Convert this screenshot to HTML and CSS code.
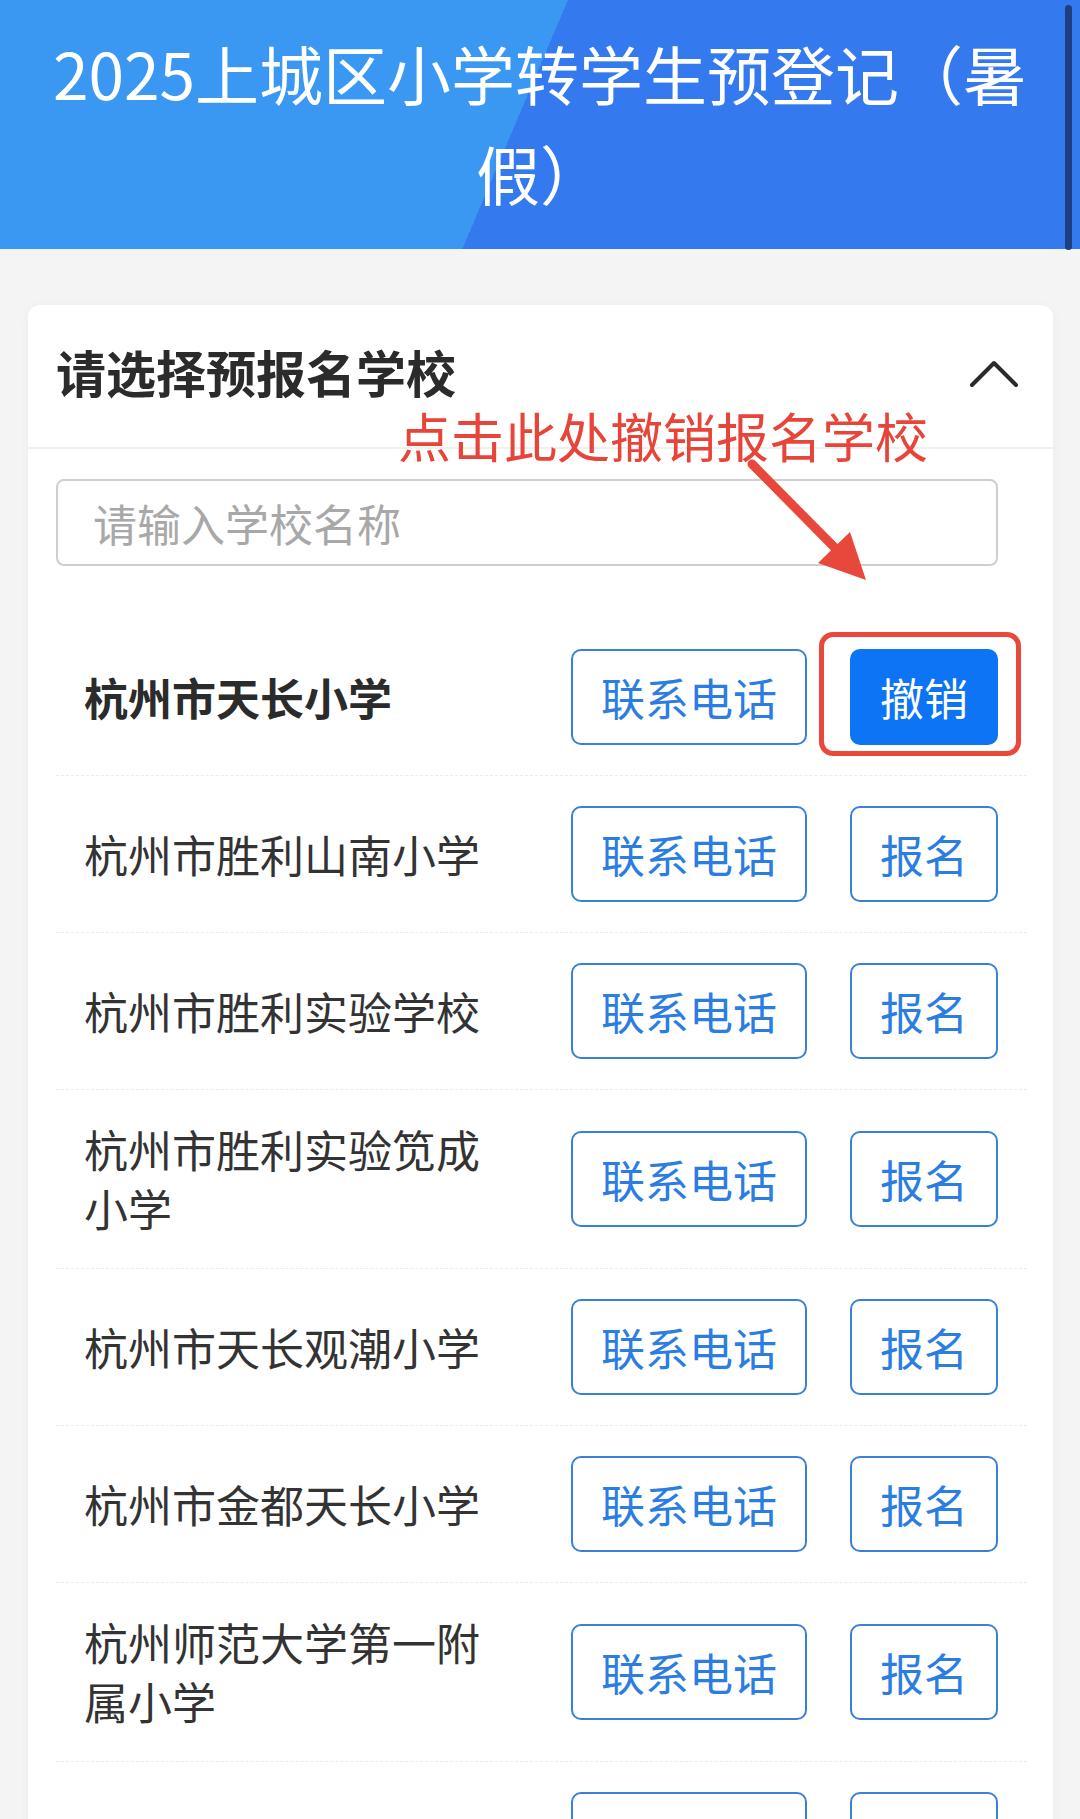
FILE: index.html
```html
<!DOCTYPE html>
<html lang="zh-CN">
<head>
    <meta charset="UTF-8">
    <meta name="viewport" content="width=device-width, initial-scale=1.0">
    <title>2025上城区小学转学生预登记（暑假）</title>
    <link rel="stylesheet" href="styles.css">
</head>
<body>
    <header class="banner">
        <h1 class="banner-title">2025上城区小学转学生预登记（暑假）</h1>
        <span class="scroll-thumb"></span>
    </header>

    <section class="card">
        <div class="card-head">
            <h2 class="card-title">请选择预报名学校</h2>
            <svg class="chevron" width="50" height="30" viewBox="0 0 50 30">
                <polyline points="3,27 25,5 47,27" fill="none" stroke="#2b2b2b" stroke-width="4" stroke-linecap="round" stroke-linejoin="round"/>
            </svg>
        </div>

        <!-- tip drawn over the list -->
        <div class="tip">点击此处撤销报名学校</div>
        <svg class="tip-arrow" width="160" height="140" viewBox="0 0 160 140">
            <line x1="24" y1="9" x2="112" y2="98" stroke="#e8483b" stroke-width="9" stroke-linecap="round"/>
            <polygon points="138,125 90,108 122,77" fill="#e8483b"/>
        </svg>

        <div class="card-body">
            <input class="search" type="text" placeholder="请输入学校名称">

            <ul class="school-list">
                <li class="school">
                    <span class="school-name picked">杭州市天长小学</span>
                    <div class="actions">
                        <button class="btn">联系电话</button>
                        <span class="mark">
                            <button class="btn btn-solid">撤销</button>
                        </span>
                    </div>
                </li>
                <li class="school">
                    <span class="school-name">杭州市胜利山南小学</span>
                    <div class="actions">
                        <button class="btn">联系电话</button>
                        <button class="btn">报名</button>
                    </div>
                </li>
                <li class="school">
                    <span class="school-name">杭州市胜利实验学校</span>
                    <div class="actions">
                        <button class="btn">联系电话</button>
                        <button class="btn">报名</button>
                    </div>
                </li>
                <li class="school">
                    <span class="school-name">杭州市胜利实验笕成小学</span>
                    <div class="actions">
                        <button class="btn">联系电话</button>
                        <button class="btn">报名</button>
                    </div>
                </li>
                <li class="school">
                    <span class="school-name">杭州市天长观潮小学</span>
                    <div class="actions">
                        <button class="btn">联系电话</button>
                        <button class="btn">报名</button>
                    </div>
                </li>
                <li class="school">
                    <span class="school-name">杭州市金都天长小学</span>
                    <div class="actions">
                        <button class="btn">联系电话</button>
                        <button class="btn">报名</button>
                    </div>
                </li>
                <li class="school">
                    <span class="school-name">杭州师范大学第一附属小学</span>
                    <div class="actions">
                        <button class="btn">联系电话</button>
                        <button class="btn">报名</button>
                    </div>
                </li>
                <li class="school">
                    <span class="school-name"></span>
                    <div class="actions">
                        <button class="btn btn-wide"></button>
                        <button class="btn btn-narrow"></button>
                    </div>
                </li>
            </ul>
        </div>
    </section>
</body>
</html>
```

FILE: styles.css
```css
html, body {
    margin: 0;
    padding: 0;
    height: 100%;
    overflow: hidden;
}

body {
    background: #f4f4f4;
    font-family: "Noto Sans CJK SC", "Noto Sans", sans-serif;
    color: #333;
}

.banner {
    position: relative;
    padding: 22px 30px 27px;
    background: linear-gradient(113deg, #3a98f3 47.9%, #3479ee 47.9%);
}

.banner-title {
    margin: 0;
    font-size: 64px;
    font-weight: 400;
    line-height: 100px;
    color: #fff;
    text-align: center;
}

.scroll-thumb {
    position: absolute;
    top: 5px;
    right: 8px;
    width: 7px;
    height: 245px;
    border-radius: 4px;
    background: #1d3f80;
}

.card {
    position: relative;
    margin: 56px 27px 0 28px;
    background: #fff;
    border-radius: 12px 12px 0 0;
    box-shadow: 0 2px 12px rgba(0, 0, 0, 0.04);
}

.card-head {
    display: flex;
    align-items: center;
    justify-content: space-between;
    height: 142px;
    padding: 0 34px 0 28px;
    border-bottom: 2px solid #f0f0f0;
}

.card-title {
    margin: -10px 0 0;
    font-size: 50px;
    font-weight: 700;
    color: #2b2b2b;
}

.chevron {
    margin-top: -6px;
}

.tip {
    position: absolute;
    left: 370px;
    top: 100px;
    font-size: 53px;
    line-height: 60px;
    color: #e8453a;
    white-space: nowrap;
}

.tip-arrow {
    position: absolute;
    left: 700px;
    top: 150px;
}

.card-body {
    padding: 0 26px 0 28px;
}

.search {
    display: block;
    box-sizing: border-box;
    width: 942px;
    height: 87px;
    margin: 30px 0 53px;
    padding: 0 0 0 35px;
    border: 2px solid #cfcfcf;
    border-radius: 8px;
    font-family: inherit;
    font-size: 44px;
    color: #333;
    outline: none;
}

.search::placeholder {
    color: #a8a8a8;
}

.school-list {
    list-style: none;
    margin: 0;
    padding: 0;
}

.school {
    display: flex;
    align-items: center;
    min-height: 96px;
    padding: 30px 29px 30px 28px;
    border-bottom: 1px dashed #ececec;
}

.school-name {
    flex: 0 0 420px;
    font-size: 44px;
    line-height: 59px;
    color: #333;
}

.school-name.picked {
    font-weight: 700;
    color: #2b2b2b;
}

.actions {
    display: flex;
    gap: 43px;
    margin-left: auto;
}

.btn {
    box-sizing: border-box;
    height: 96px;
    padding: 0 28px;
    border: 2px solid #3a7fd8;
    border-radius: 10px;
    background: #fff;
    font-family: inherit;
    font-size: 44px;
    color: #2b7de2;
}

.btn-wide {
    width: 236px;
}

.btn-narrow {
    width: 148px;
}

.btn-solid {
    background: #0d74f5;
    border-color: #0d74f5;
    color: #fff;
}

/* red frame around the cancel button */
.mark {
    position: relative;
    display: flex;
}

.mark::after {
    content: "";
    position: absolute;
    top: -17px;
    right: -23px;
    bottom: -11px;
    left: -31px;
    border: 5px solid #e8493b;
    border-radius: 14px;
}
```
